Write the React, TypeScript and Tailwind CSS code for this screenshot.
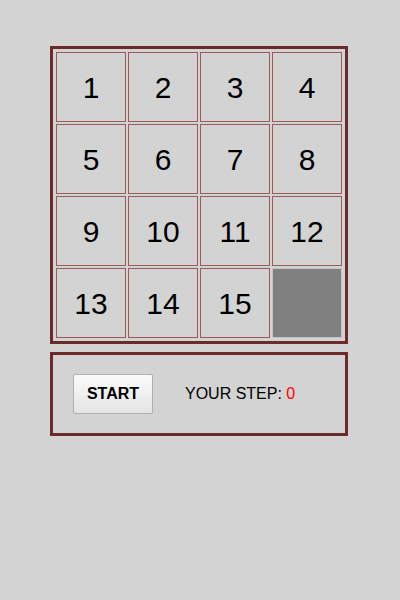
import React from "react";

const tiles: (number | null)[] = [1, 2, 3, 4, 5, 6, 7, 8, 9, 10, 11, 12, 13, 14, 15, null];

export default function App() {
  return (
    <div
      className="w-[400px] h-[600px] bg-[#d3d3d3] pt-[46px] pl-[50px]"
      style={{ fontFamily: '"Liberation Sans", Arial, sans-serif' }}
    >
      <div className="w-[298px] h-[298px] border-[3px] border-[#6b2b2b] p-[2px] grid grid-cols-4">
        {tiles.map((t, i) =>
          t === null ? (
            <div key={i} className="m-[1px] w-[70px] h-[70px] bg-[#808080] border border-[#c4c4c4]" />
          ) : (
            <div
              key={i}
              className="m-[1px] w-[70px] h-[70px] border border-[#9a5a5a] flex items-center justify-center text-[30px] text-black"
            >
              {t}
            </div>
          )
        )}
      </div>
      <div className="mt-[8px] w-[298px] h-[84px] border-[3px] border-[#6b2b2b] flex items-center pl-[20px]">
        <button className="w-[80px] h-[40px] rounded-[2px] border border-[#b0b0b0] bg-gradient-to-b from-[#fbfbfb] to-[#e4e4e4] text-[16px] font-bold text-black">
          START
        </button>
        <div className="ml-[32px] text-[16px] text-black">
          YOUR STEP: <span className="text-[#ff0000]">0</span>
        </div>
      </div>
    </div>
  );
}
